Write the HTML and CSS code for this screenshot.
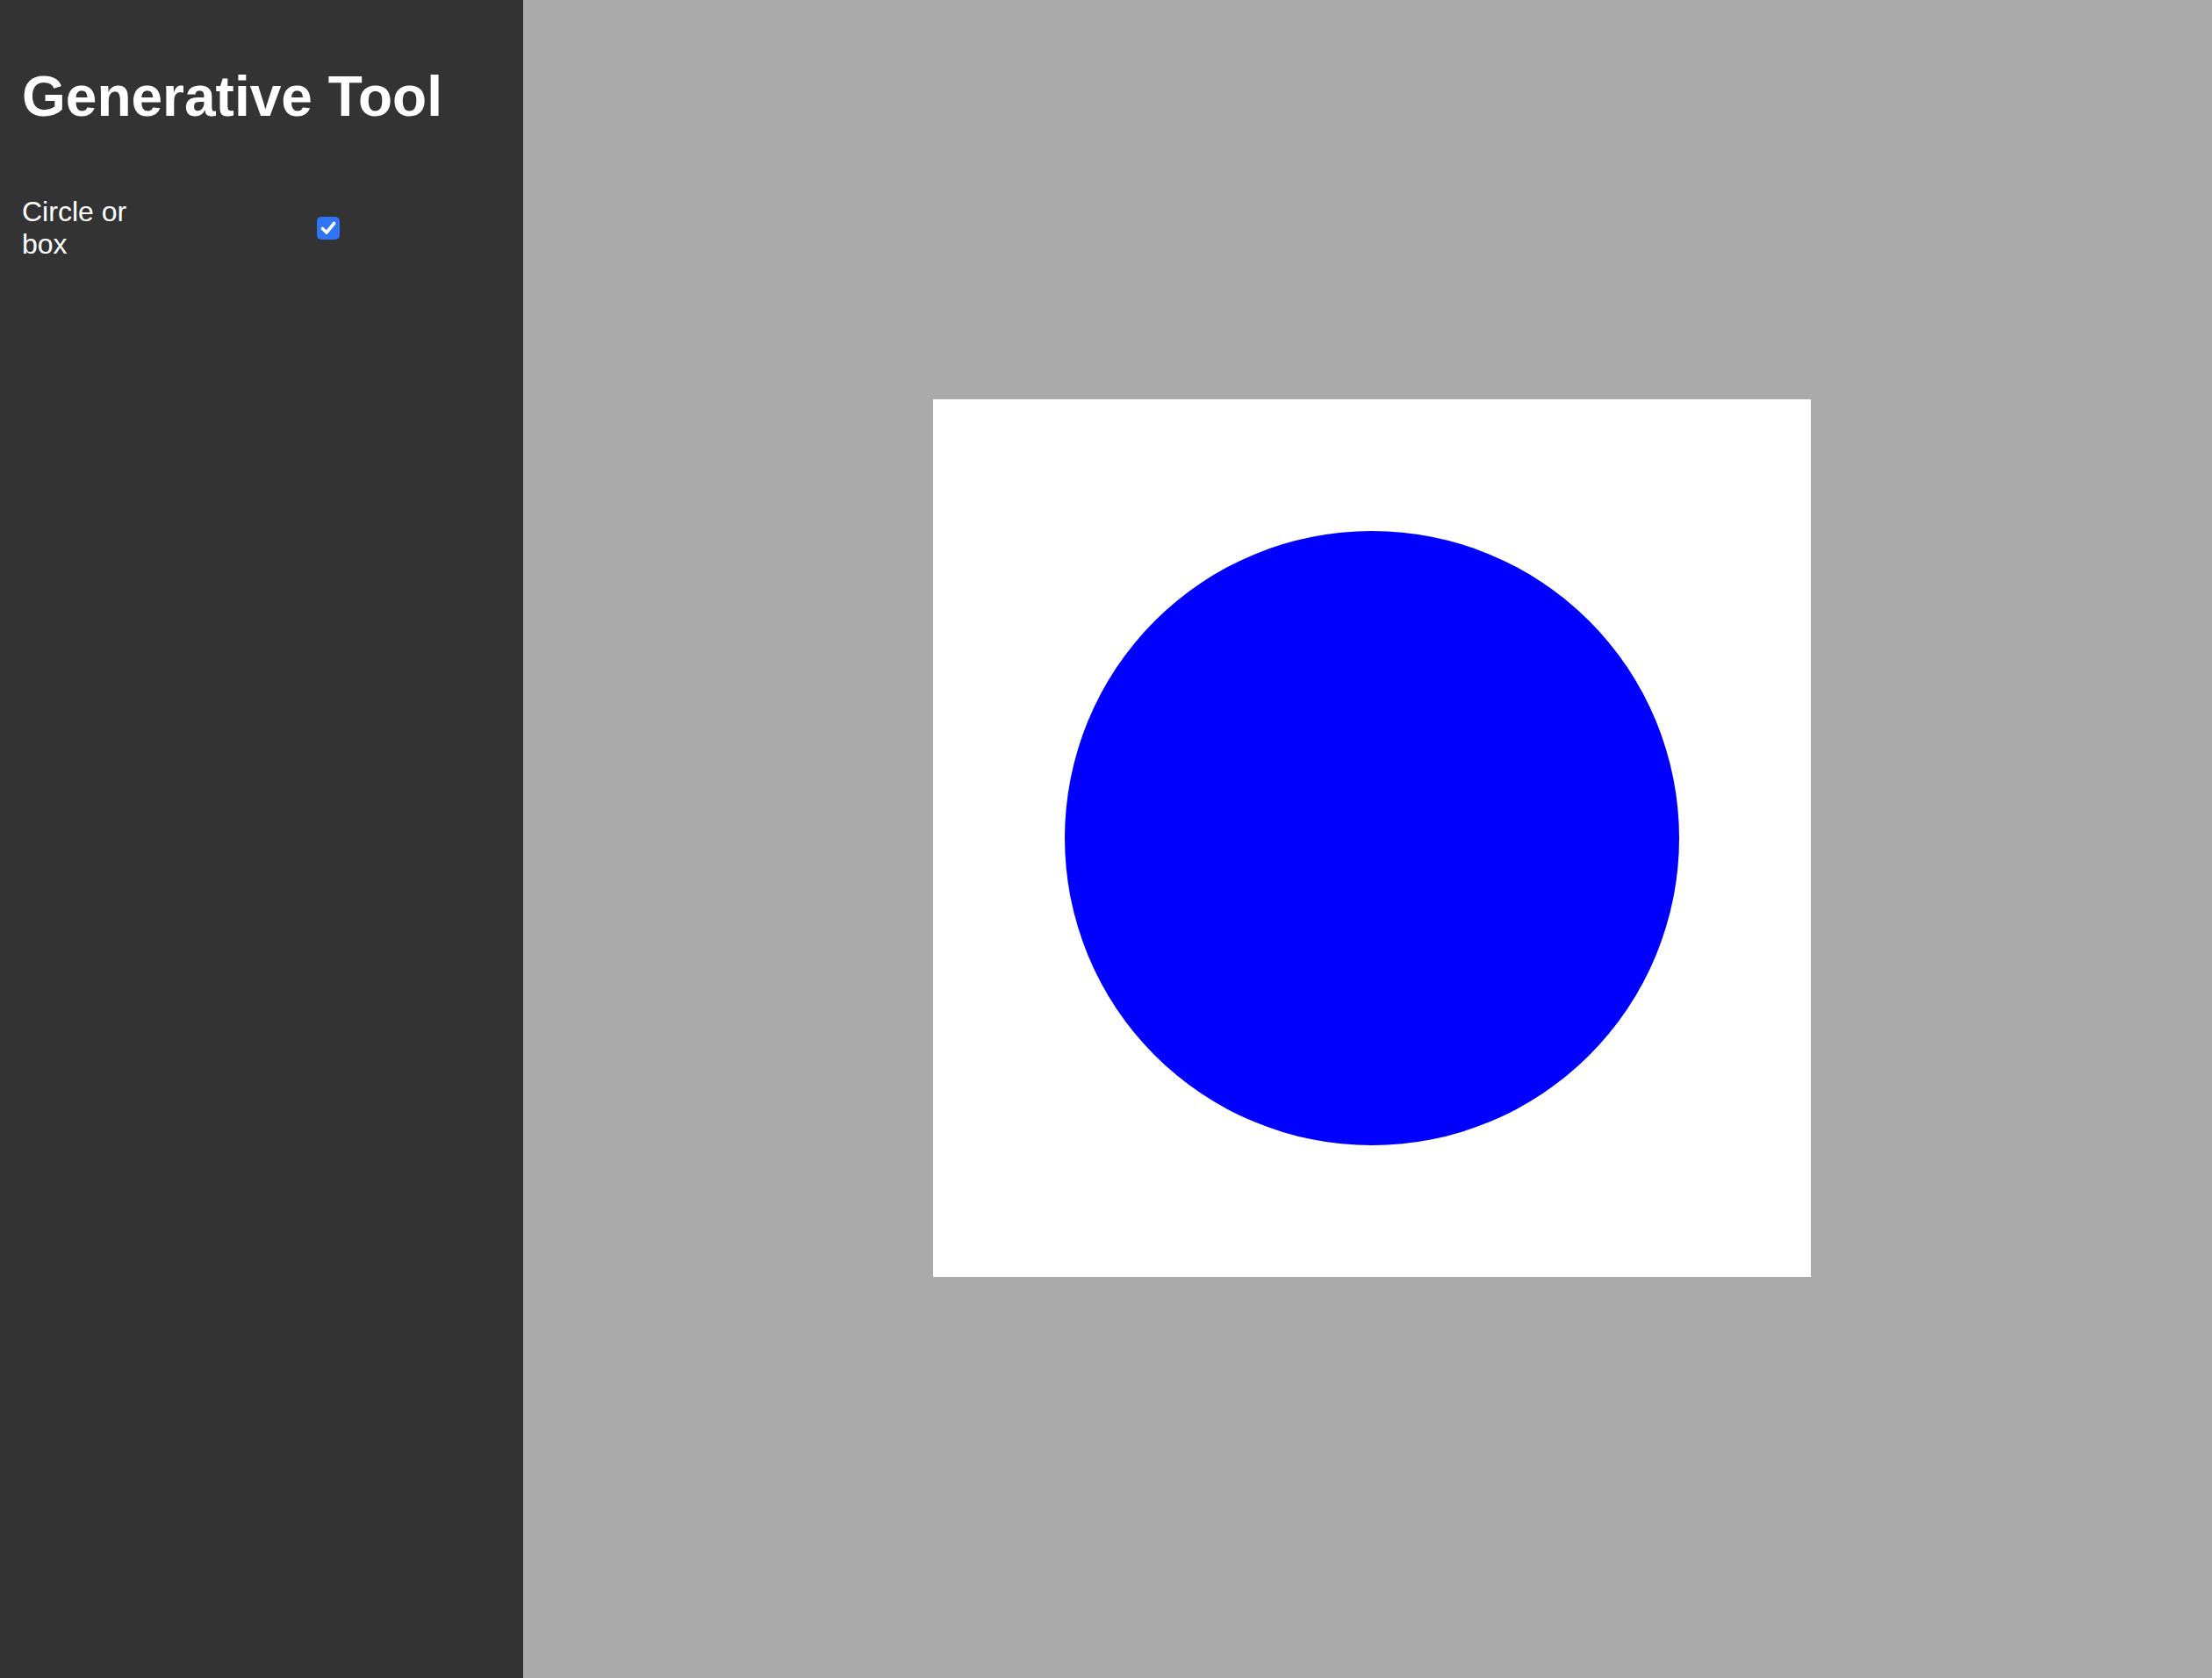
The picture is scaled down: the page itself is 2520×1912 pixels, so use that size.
FILE: index.html
```html
<!DOCTYPE html>
<html lang="en">
<head>
<meta charset="utf-8">
<title>Generative Tool</title>
<link rel="stylesheet" href="styles.css">
</head>
<body>
<div class="app">
  <aside class="sidebar">
    <h1 class="title">Generative Tool</h1>
    <label class="control">
      <span class="control-label">Circle or box</span>
      <span class="checkbox">
        <input type="checkbox" class="checkbox-input" checked>
        <svg class="checkbox-box" width="26" height="26" viewBox="0 0 26 26" aria-hidden="true">
          <rect x="0" y="0" width="26" height="26" rx="5" ry="5" fill="#2f74f5"/>
          <path d="M6.5 13.5 L11 18 L19.5 7.5" fill="none" stroke="#ffffff" stroke-width="3.6" stroke-linecap="round" stroke-linejoin="round"/>
        </svg>
      </span>
    </label>
  </aside>
  <main class="stage">
    <div class="canvas">
      <svg width="1000" height="1000" viewBox="0 0 1000 1000">
        <rect width="1000" height="1000" fill="#ffffff"/>
        <circle cx="500" cy="500" r="350" fill="#0000ff"/>
      </svg>
    </div>
  </main>
</div>
</body>
</html>
```

FILE: styles.css
```css
html, body {
  margin: 0;
  padding: 0;
  height: 100%;
}

body {
  font-family: "Liberation Sans", Arial, Helvetica, sans-serif;
  background: #aaaaaa;
}

.app {
  display: flex;
  height: 1912px;
  overflow: hidden;
}

.sidebar {
  flex: 0 0 596px;
  box-sizing: border-box;
  padding: 0 25px;
  background: #333333;
  color: #ffffff;
}

.title {
  margin: 73px 0 76px 0;
  font-size: 64px;
  font-weight: bold;
  line-height: normal;
}

.control {
  display: grid;
  grid-template-columns: 336px 26px;
  align-items: center;
  font-size: 32px;
  line-height: normal;
}

.control-label {
  max-width: 150px;
}

.checkbox {
  position: relative;
  display: block;
  width: 26px;
  height: 26px;
}

.checkbox-input {
  position: absolute;
  inset: 0;
  margin: 0;
  opacity: 0;
  width: 26px;
  height: 26px;
}

.checkbox-box {
  display: block;
}

.stage {
  flex: 1 1 auto;
  display: flex;
  align-items: center;
  justify-content: center;
  padding: 0 0 2px 10px;
  background: #aaaaaa;
}

.canvas {
  width: 1000px;
  height: 1000px;
  flex: 0 0 auto;
}

.canvas svg {
  display: block;
}
```
